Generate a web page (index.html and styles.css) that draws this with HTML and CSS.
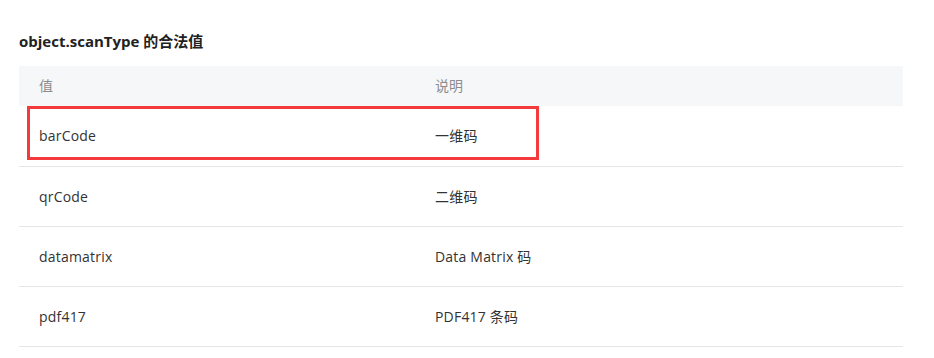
FILE: index.html
```html
<!DOCTYPE html>
<html lang="zh">
<head>
<meta charset="utf-8">
<link rel="stylesheet" href="styles.css">
</head>
<body>
<div class="page">
  <h4 class="title">object.scanType 的合法值</h4>
  <table class="table">
    <thead>
      <tr><th class="c1">值</th><th>说明</th></tr>
    </thead>
    <tbody>
      <tr class="hl"><td class="c1"><span class="mark"></span>barCode</td><td>一维码</td></tr>
      <tr><td class="c1">qrCode</td><td>二维码</td></tr>
      <tr><td class="c1">datamatrix</td><td>Data Matrix 码</td></tr>
      <tr><td class="c1">pdf417</td><td>PDF417 条码</td></tr>
    </tbody>
  </table>
</div>
</body>
</html>
```
FILE: styles.css
```css
html, body {
  margin: 0;
  padding: 0;
  background: #fff;
}
body {
  font-family: "Open Sans", "Noto Sans CJK SC", sans-serif;
  color: #333;
}
.page {
  padding: 0 31px 0 19px;
}
.title {
  margin: 31px 0 15px;
  font-size: 15px;
  line-height: 20px;
  font-weight: 700;
  color: #222;
}
.table {
  width: 100%;
  border-collapse: separate;
  border-spacing: 0;
  font-size: 14px;
}
.table th {
  background: #f6f7f9;
  color: #8c8c8c;
  font-weight: 400;
  text-align: left;
  height: 40px;
  padding: 0 20px;
  line-height: 20px;
}
.table td {
  height: 59px;
  padding: 0 20px;
  border-bottom: 1px solid #e6e6e6;
  line-height: 20px;
  letter-spacing: 0.2px;
}
.table .hl td {
  height: 60px;
}
.table .c1 {
  width: 356px;
}
.hl .c1 {
  position: relative;
}
.mark {
  position: absolute;
  left: 8px;
  top: 0;
  width: 506px;
  height: 48px;
  border: 3px solid #f43a3c;
  pointer-events: none;
}
```
